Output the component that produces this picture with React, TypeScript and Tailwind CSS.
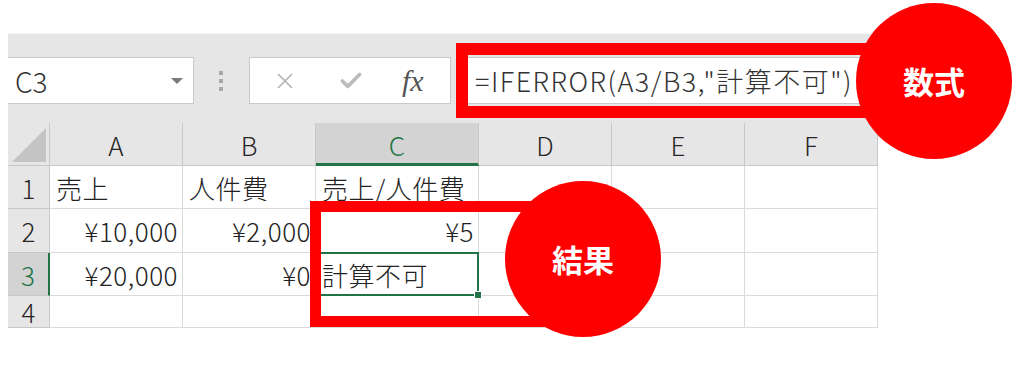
import { Check, X } from 'lucide-react';

const cols = ['A', 'B', 'C', 'D', 'E', 'F'];

const rows: { n: string; cells: { text: string; align: 'left' | 'right' }[] }[] = [
  {
    n: '1',
    cells: [
      { text: '売上', align: 'left' },
      { text: '人件費', align: 'left' },
      { text: '売上/人件費', align: 'left' },
      { text: '', align: 'left' },
      { text: '', align: 'left' },
      { text: '', align: 'left' },
    ],
  },
  {
    n: '2',
    cells: [
      { text: '¥10,000', align: 'right' },
      { text: '¥2,000', align: 'right' },
      { text: '¥5', align: 'right' },
      { text: '', align: 'left' },
      { text: '', align: 'left' },
      { text: '', align: 'left' },
    ],
  },
  {
    n: '3',
    cells: [
      { text: '¥20,000', align: 'right' },
      { text: '¥0', align: 'right' },
      { text: '計算不可', align: 'left' },
      { text: '', align: 'left' },
      { text: '', align: 'left' },
      { text: '', align: 'left' },
    ],
  },
  {
    n: '4',
    cells: [
      { text: '', align: 'left' },
      { text: '', align: 'left' },
      { text: '', align: 'left' },
      { text: '', align: 'left' },
      { text: '', align: 'left' },
      { text: '', align: 'left' },
    ],
  },
];

const FormulaBar = () => (
  <div className="flex h-[90px] items-start border-t border-[#f2f2f2] bg-[#e6e6e6] pt-[23px]">
    <div className="flex h-[47px] w-[186px] items-center justify-between border border-l-0 border-[#c9c9c9] bg-white pr-[10px] pl-[7px]">
      <span className="text-[28px] leading-none text-[#333]">C3</span>
      <span className="h-0 w-0 border-x-[6px] border-t-[6px] border-x-transparent border-t-[#7a7a7a]" />
    </div>
    <div className="ml-[25px] flex h-[47px] flex-col justify-center gap-[4px]">
      <span className="size-[4px] bg-[#a8a8a8]" />
      <span className="size-[4px] bg-[#a8a8a8]" />
      <span className="size-[4px] bg-[#a8a8a8]" />
    </div>
    <div className="ml-[26px] flex h-[47px] w-[202px] items-center border border-[#c9c9c9] bg-white">
      <X className="ml-[22px] size-[26px] text-[#b4b4b4]" strokeWidth={1.6} />
      <Check className="ml-[40px] size-[26px] text-[#bcbcbc]" strokeWidth={3.4} />
      <span className="ml-[38px] font-['Liberation_Serif',serif] text-[30px] leading-none text-[#555] italic">
        fx
      </span>
    </div>
    <div className="ml-[7px] flex h-[47px] flex-1 items-center border border-[#c9c9c9] bg-white pl-[16px]">
      <span className="text-[27px] leading-none tracking-[1.5px] whitespace-nowrap text-[#333]">
        =IFERROR(A3/B3,"計算不可")
      </span>
    </div>
  </div>
);

const Grid = () => (
  <div className="grid grid-cols-[42px_133px_133px_163px_133px_133px_133px] grid-rows-[43px_43px_44px_43px_32px] text-[#222]">
    <div className="flex items-end justify-end border-r border-b border-[#c8c8c8] bg-[#e6e6e6] pr-[3px] pb-[3px]">
      <span className="h-0 w-0 border-b-[34px] border-l-[34px] border-b-[#c4c4c4] border-l-transparent" />
    </div>
    {cols.map((c) =>
      c === 'C' ? (
        <div
          key={c}
          className="flex items-center justify-center border-r border-b-[3px] border-r-[#c8c8c8] border-b-[#217346] bg-[#d3d3d3] pt-[2px] text-[26px] text-[#217346]"
        >
          {c}
        </div>
      ) : (
        <div
          key={c}
          className="flex items-center justify-center border-r border-b border-[#c8c8c8] bg-[#e6e6e6] text-[26px] text-[#262626]"
        >
          {c}
        </div>
      )
    )}
    {rows.map((r) => (
      <>
        <div
          key={r.n}
          className={
            r.n === '3'
              ? 'flex items-center justify-center border-r-2 border-b border-r-[#217346] border-b-[#c8c8c8] bg-[#d3d3d3] text-[26px] text-[#217346]'
              : 'flex items-center justify-center border-r border-b border-[#c8c8c8] bg-[#e6e6e6] text-[26px] text-[#262626]'
          }
        >
          {r.n}
        </div>
        {r.cells.map((cell, i) => (
          <div
            key={r.n + i}
            className={`relative flex items-center overflow-visible border-r border-b border-[#dadada] bg-white text-[26px] tracking-[0.5px] whitespace-nowrap ${
              cell.align === 'right' ? 'justify-end pr-[4px]' : 'justify-start pl-[6px]'
            }`}
          >
            {cell.text}
            {r.n === '3' && i === 2 && (
              <div className="absolute -top-[1px] -right-[1px] -bottom-[1px] -left-[1px] z-10 border-2 border-[#217346]">
                <span className="absolute -right-[5px] -bottom-[5px] size-[8px] border border-white bg-[#217346]" />
              </div>
            )}
          </div>
        ))}
      </>
    ))}
  </div>
);

export default function App() {
  return (
    <div className="relative h-[369px] w-[1024px] overflow-hidden bg-white font-['Noto_Sans_CJK_JP',sans-serif] font-light">
      <div className="mt-[33px] ml-[8px] w-[871px]">
        <FormulaBar />
        <Grid />
      </div>

      {/* annotations */}
      <div className="absolute top-[43px] left-[456px] z-20 h-[75px] w-[420px] border-[12px] border-[#ff0000]" />
      <div className="absolute top-[201px] left-[310px] z-20 h-[126px] w-[250px] border-[11px] border-[#ff0000]" />
      <div className="absolute top-[3px] left-[856px] z-20 flex size-[156px] items-center justify-center rounded-full bg-[#ff0000] text-[31px] font-bold text-white">
        数式
      </div>
      <div className="absolute top-[181px] left-[505px] z-20 flex size-[156px] items-center justify-center rounded-full bg-[#ff0000] text-[31px] font-bold text-white">
        結果
      </div>
    </div>
  );
}
